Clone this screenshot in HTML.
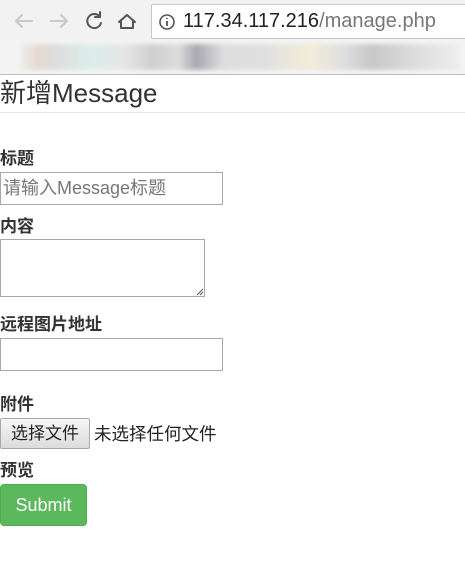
<!DOCTYPE html>
<html><head><meta charset="utf-8"><style>
*{box-sizing:border-box;margin:0;padding:0}
body{width:465px;height:564px;overflow:hidden;background:#fff;font-family:"Liberation Sans","Noto Sans CJK SC",sans-serif;color:#333;position:relative}
.a{position:absolute}
.lbl{position:absolute;left:0;font-weight:bold;font-size:17px;line-height:20px;color:#333}
.inp{position:absolute;left:0;border:1px solid #a9a9a9;background:#fff}
</style></head><body>
<div class="a" style="left:0;top:0;width:465px;height:40px;background:#f2f2f2"></div>
<svg class="a" style="left:0;top:0" width="150" height="40">
<g fill="none" stroke-width="2" stroke-linecap="round" stroke-linejoin="round">
<path d="M32 21H16M22 15l-6 6 6 6" stroke="#c8c8c8"/>
<path d="M51 21h16M61 15l6 6-6 6" stroke="#c8c8c8"/>
<path d="M100 17a7 7 0 1 0 1 6M100 12v5h-5" stroke="#555"/>
<path d="M119 22l8-7 8 7M121 20v8h12v-8" stroke="#555"/>
</g></svg>
<div class="a" style="left:151px;top:4px;width:330px;height:35px;background:#fff;border:1px solid #c8c8c8;border-radius:2px"></div>
<svg class="a" style="left:158px;top:13px" width="18" height="18"><circle cx="9" cy="9" r="7" fill="none" stroke="#555" stroke-width="1.6"/><path d="M9 8v5M9 5v1" stroke="#555" stroke-width="1.8"/></svg>
<div class="a" style="left:183px;top:10px;font-size:20px;line-height:22px;color:#222">117.34.117.216<span style="color:#777">/manage.php</span></div>
<div class="a" style="left:0;top:40px;width:465px;height:34px;background:#f4f4f4"></div>
<div class="a" style="left:20px;top:44px;width:440px;height:26px;background:linear-gradient(90deg,#eee 0,#e8d8d0 4%,#ddd 8%,#dceeea 16%,#e6e6e6 24%,#cfcfcf 30%,#ddd 36%,#a8a8b0 40%,#ddd 46%,#e0e0e0 56%,#f2ecd8 66%,#ddd 74%,#c8c8c8 80%,#ddd 90%,#eee);filter:blur(2px)"></div>
<div class="a" style="left:0;top:74px;width:465px;height:1px;background:#bbb"></div>
<div class="a" style="left:0;top:78px;font-size:26px;line-height:30px;color:#333">新增Message</div>
<div class="a" style="left:0;top:112px;width:465px;height:1px;background:#e5e5e5"></div>
<div class="lbl" style="top:149px">标题</div>
<div class="inp" style="top:172px;width:223px;height:33px;font-size:18px;line-height:31px;color:#777;padding-left:2px">请输入Message标题</div>
<div class="lbl" style="top:217px">内容</div>
<div class="inp" style="top:239px;width:205px;height:58px"></div>
<svg class="a" style="left:195px;top:287px" width="9" height="9"><path d="M2 8L8 2M5 8L8 5" stroke="#555" stroke-width="1"/></svg>
<div class="lbl" style="top:315px">远程图片地址</div>
<div class="inp" style="top:338px;width:223px;height:33px"></div>
<div class="lbl" style="top:395px">附件</div>
<div class="a" style="left:0;top:418px;width:90px;height:31px;border:1px solid #a9a9a9;border-radius:2px;background:linear-gradient(#f6f6f6,#dcdcdc);font-size:17px;line-height:29px;text-align:center;color:#222">选择文件</div>
<div class="a" style="left:94px;top:423px;font-size:17.5px;line-height:22px;color:#222">未选择任何文件</div>
<div class="lbl" style="top:461px">预览</div>
<div class="a" style="left:0;top:484px;width:87px;height:42px;background:#5cb85c;border:1px solid #4cae4c;border-radius:4px;color:#fff;font-size:18px;line-height:40px;text-align:center">Submit</div>
</body></html>
